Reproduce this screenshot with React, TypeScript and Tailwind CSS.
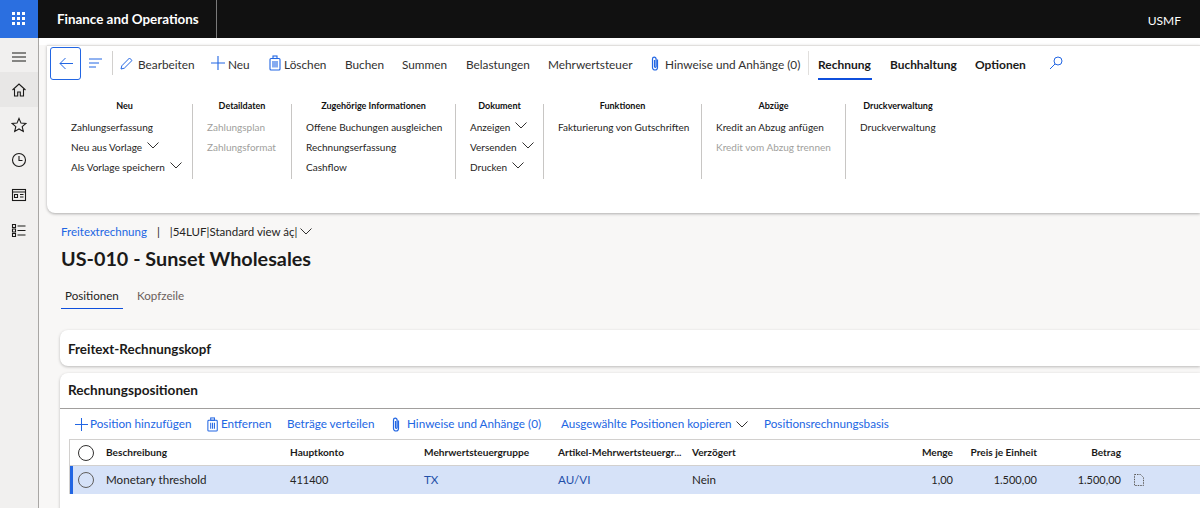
const font = "font-['Lato','Open_Sans',sans-serif]";

function Chevron({ className = "" }: { className?: string }) {
  return (
    <svg className={`shrink-0 ${className}`} width="12" height="7" viewBox="0 0 12 7" fill="none" stroke="#323130" strokeWidth="1">
      <path d="M.5.5 6 6 11.5.5" />
    </svg>
  );
}

function Waffle() {
  return (
    <svg width="14" height="14" viewBox="0 0 14 14" fill="#fff">
      {[1, 6, 11].map((y) =>
        [1, 6, 11].map((x) => <rect key={`${x}-${y}`} x={x - 1} y={y - 1} width="3" height="3" />),
      )}
    </svg>
  );
}

function Trash({ size = 16 }: { size?: number }) {
  return (
    <svg className="shrink-0" width={size} height={size} viewBox="0 0 16 16" fill="none" stroke="#2266e3" strokeWidth="1.1">
      <rect x="2" y="3.5" width="10" height="11.5" rx="1" />
      <rect x="5" y="1" width="4" height="2.5" />
      <path d="M5 6v6.5M7 6v6.5M9 6v6.5" />
    </svg>
  );
}

function Plus({ size = 14 }: { size?: number }) {
  return (
    <svg className="shrink-0" width={size} height={size} viewBox="0 0 14 14" stroke="#2266e3" strokeWidth="1.1">
      <path d="M7 0v14M0 7h14" />
    </svg>
  );
}

function Clip() {
  return (
    <svg className="shrink-0" width="10" height="15" viewBox="0 0 10 15" fill="none" stroke="#2266e3" strokeWidth="1.2">
      <path d="M7.5 3.5v8a2.5 2.5 0 0 1-5 0V3a1.8 1.8 0 0 1 3.6 0v7.5a.8.8 0 0 1-1.6 0V4" />
    </svg>
  );
}

function SideIcon({ kind, active }: { kind: string; active?: boolean }) {
  return (
    <div className={`flex h-[35px] w-full items-center justify-center ${active ? "bg-[#e8e7e6]" : ""}`}>
      <svg width="16" height="16" viewBox="0 0 16 16" fill="none" stroke="#1b1a19" strokeWidth="1.1">
        {kind === "home" && <path d="M1.5 8 8 2l6.5 6M3.5 7v7h3.2v-4h2.6v4h3.2V7" />}
        {kind === "star" && <path d="m8 1.5 2 4.6 4.9.4-3.7 3.2 1.1 4.8L8 12l-4.3 2.5 1.1-4.8L1.1 6.5 6 6.1z" />}
        {kind === "clock" && (
          <>
            <circle cx="8" cy="8" r="6.5" />
            <path d="M8 4v4.5h3.5" />
          </>
        )}
        {kind === "card" && (
          <>
            <rect x="1.5" y="2.5" width="13" height="11" />
            <path d="M1.5 5h13M3.5 7.5h3v3h-3zM9 7.5h3.5M9 10h3.5" />
          </>
        )}
        {kind === "list" && <path d="M1.5 2.5h3v3h-3zM1.5 7h3v3h-3zM1.5 11.5h3v3h-3zM6.5 4h8M6.5 8.5h8M6.5 13h8" />}
      </svg>
    </div>
  );
}

function Cmd({ children, w }: { children: React.ReactNode; w?: string }) {
  return <span className={`shrink-0 pt-[3px] whitespace-nowrap text-[11.8px] text-[#323130] ${w ?? ""}`}>{children}</span>;
}

type Item = { label: string; menu?: boolean; off?: boolean };

function Group({ title, items, width, last }: { title: string; items: Item[]; width: string; last?: boolean }) {
  return (
    <div className={`flex shrink-0 ${width}`}>
      <div className="flex min-w-0 flex-1 flex-col">
        <div className="mb-[4px] h-[14px] text-center text-[9px] leading-[14px] font-bold text-[#111]">{title}</div>
        <div className="flex flex-col items-start pl-[14px]">
          {items.map((it) => (
            <div
              key={it.label}
              className={`flex h-[20px] items-center gap-[5px] whitespace-nowrap text-[10px] ${it.off ? "text-[#a19f9d]" : "text-[#252423]"}`}
            >
              {it.label}
              {it.menu && <Chevron className="-mt-[3px]" />}
            </div>
          ))}
        </div>
      </div>
      {!last && <div className="mt-[5px] h-[75px] w-px shrink-0 bg-[#c8c6c4]" />}
    </div>
  );
}

function Th({ children, className }: { children: React.ReactNode; className: string }) {
  return <div className={`shrink-0 whitespace-nowrap text-[10.1px] font-bold text-[#1b1a19] ${className}`}>{children}</div>;
}

function Td({ children, className }: { children: React.ReactNode; className: string }) {
  return <div className={`shrink-0 ${className}`}>{children}</div>;
}

export default function App() {
  return (
    <div className={`flex h-[508px] w-[1200px] flex-col overflow-hidden bg-[#f8f7f6] ${font}`}>
      {/* top bar */}
      <header className="flex h-[38px] shrink-0 items-center bg-[#111111] text-white">
        <div className="flex h-full w-[38px] items-center justify-center bg-[#2b6fe0]">
          <Waffle />
        </div>
        <div className="flex h-full w-[179px] items-center border-r border-[#7a7a7a] pl-[19px] text-[13.4px] font-bold whitespace-nowrap">
          Finance and Operations
        </div>
        <div className="ml-auto pt-[3px] pr-[19px] text-[12px]">USMF</div>
      </header>

      <div className="flex min-h-0 flex-1">
        {/* side nav */}
        <nav className="flex w-[39px] shrink-0 flex-col items-center border-r border-[#a8a6a4] bg-[#f1f0ef]">
          <div className="flex h-[34px] w-full items-center justify-center pt-[4px]">
            <svg width="14" height="10" viewBox="0 0 14 10" stroke="#1b1a19" strokeWidth="1.2">
              <path d="M0 1h14M0 5h14M0 9h14" />
            </svg>
          </div>
          <SideIcon kind="home" active />
          <SideIcon kind="star" />
          <SideIcon kind="clock" />
          <SideIcon kind="card" />
          <SideIcon kind="list" />
        </nav>

        <main className="min-w-0 flex-1 overflow-hidden">
          <div className="h-[7px] bg-white" />
          {/* ribbon */}
          <section className="ml-[8px] h-[168px] rounded-bl-[8px] border-t border-[#e1dfdd] bg-white shadow-[0_1px_3px_rgba(0,0,0,0.3)]">
            <div className="flex h-[34px] items-center pl-[3px]">
              <div className="flex h-[33px] w-[31px] shrink-0 items-center justify-center rounded-[3px] border border-[#2266e3]">
                <svg width="14" height="13" viewBox="0 0 14 13" fill="none" stroke="#2266e3" strokeWidth="1">
                  <path d="M14 6.5H1M6.5 1 1 6.5 6.5 12" />
                </svg>
              </div>
              <div className="ml-[8px] flex w-[23px] shrink-0 justify-start">
                <svg width="14" height="10" viewBox="0 0 14 10" stroke="#2266e3" strokeWidth="1">
                  <path d="M0 1h13M0 5h10M0 9h7" />
                </svg>
              </div>
              <div className="mr-[7px] h-[24px] w-px shrink-0 bg-[#d2d0ce]" />
              <svg className="mr-[5px] shrink-0" width="13" height="13" viewBox="0 0 13 13" fill="none" stroke="#2266e3">
                <path d="M1 12l.8-3.2L9.5 1l2.5 2.5-7.7 7.7z" />
              </svg>
              <Cmd w="w-[73px]">Bearbeiten</Cmd>
              <Plus />
              <span className="w-[3px] shrink-0" />
              <Cmd w="w-[40px]">Neu</Cmd>
              <Trash />
              <Cmd w="w-[61px]">Löschen</Cmd>
              <Cmd w="w-[57px]">Buchen</Cmd>
              <Cmd w="w-[64px]">Summen</Cmd>
              <Cmd w="w-[82px]">Belastungen</Cmd>
              <Cmd w="w-[102px]">Mehrwertsteuer</Cmd>
              <Clip />
              <span className="w-[5px] shrink-0" />
              <Cmd w="w-[143px]">Hinweise und Anhänge (0)</Cmd>
              <div className="h-[24px] w-px shrink-0 bg-[#e1dfdd]" />
              <span className="w-[9px] shrink-0" />
              <div className="relative flex h-full w-[72px] shrink-0 items-center pt-[3px]">
                <span className="text-[12px] font-bold text-[#1b1a19]">Rechnung</span>
                <span className="absolute bottom-0 left-0 h-[2px] w-[54px] bg-[#0f4fdc]" />
              </div>
              <span className="w-[85px] shrink-0 pt-[3px] text-[11.9px] font-bold text-[#1b1a19]">Buchhaltung</span>
              <span className="w-[74px] shrink-0 pt-[3px] text-[12px] font-bold text-[#1b1a19]">Optionen</span>
              <svg width="14" height="14" viewBox="0 0 14 14" fill="none" stroke="#2266e3">
                <circle cx="9" cy="5" r="4" />
                <path d="M6 8 1 13" />
              </svg>
            </div>

            <div className="mt-[19px] flex pl-[10px]">
              <Group
                title="Neu"
                width="w-[136px]"
                items={[
                  { label: "Zahlungserfassung" },
                  { label: "Neu aus Vorlage", menu: true },
                  { label: "Als Vorlage speichern", menu: true },
                ]}
              />
              <Group title="Detaildaten" width="w-[99px]" items={[{ label: "Zahlungsplan", off: true }, { label: "Zahlungsformat", off: true }]} />
              <Group
                title="Zugehörige Informationen"
                width="w-[164px]"
                items={[{ label: "Offene Buchungen ausgleichen" }, { label: "Rechnungserfassung" }, { label: "Cashflow" }]}
              />
              <Group
                title="Dokument"
                width="w-[88px]"
                items={[
                  { label: "Anzeigen", menu: true },
                  { label: "Versenden", menu: true },
                  { label: "Drucken", menu: true },
                ]}
              />
              <Group title="Funktionen" width="w-[158px]" items={[{ label: "Fakturierung von Gutschriften" }]} />
              <Group
                title="Abzüge"
                width="w-[144px]"
                items={[{ label: "Kredit an Abzug anfügen" }, { label: "Kredit vom Abzug trennen", off: true }]}
              />
              <Group title="Druckverwaltung" width="w-[104px]" last items={[{ label: "Druckverwaltung" }]} />
            </div>
          </section>

          {/* page head */}
          <div className="mt-[10px] flex h-[17px] items-center pl-[22px] text-[11.5px] text-[#252423]">
            <span className="text-[#2266e3]">Freitextrechnung</span>
            <span className="mx-[10px]">|</span>
            <span>|54LUF|Standard view áç|</span>
            <Chevron className="ml-[3px]" />
          </div>
          <h1 className="mt-[4px] h-[28px] pl-[22px] text-[19.8px] leading-[28px] font-bold text-[#1b1a19]">
            US-010 - Sunset Wholesales
          </h1>
          <div className="mt-[15px] flex h-[22px] pl-[22px] text-[11.6px]">
            <div className="w-[62px] border-b border-[#0f4fdc] pl-[4px] text-[#252423]">Positionen</div>
            <div className="pl-[14px] text-[#6b5f5c]">Kopfzeile</div>
          </div>

          {/* header card */}
          <div className="mt-[21px] ml-[21px] flex h-[36px] items-center rounded-l-[8px] bg-white pt-[3px] pl-[8px] text-[13.4px] font-bold text-[#1b1a19] shadow-[0_1px_3px_rgba(0,0,0,0.25)]">
            Freitext-Rechnungskopf
          </div>

          {/* lines card */}
          <section className="mt-[7px] ml-[21px] h-[200px] rounded-tl-[8px] bg-white shadow-[0_1px_3px_rgba(0,0,0,0.25)]">
            <div className="flex h-[36px] items-center border-b border-[#a19f9d] pl-[8px] text-[13.6px] font-bold text-[#1b1a19]">
              Rechnungspositionen
            </div>
            <div className="flex h-[30px] items-center pl-[15px] text-[11.7px] text-[#2266e3]">
              <Plus size={13} />
              <span className="ml-[2px] w-[116px] shrink-0 whitespace-nowrap">Position hinzufügen</span>
              <Trash size={15} />
              <span className="w-[66px] shrink-0">Entfernen</span>
              <span className="w-[104px] shrink-0 whitespace-nowrap">Beträge verteilen</span>
              <Clip />
              <span className="ml-[6px] w-[154px] shrink-0 whitespace-nowrap">Hinweise und Anhänge (0)</span>
              <span className="w-[175px] shrink-0 whitespace-nowrap">Ausgewählte Positionen kopieren</span>
              <Chevron />
              <span className="ml-[16px] whitespace-nowrap">Positionsrechnungsbasis</span>
            </div>

            <div className="ml-[9px] border-l border-[#d2d0ce]">
              <div className="flex h-[27px] items-center border-y border-[#d2d0ce]">
                <div className="flex w-[36px] shrink-0 pl-[8px]">
                  <span className="h-[16px] w-[16px] rounded-full border border-[#323130]" />
                </div>
                <Th className="w-[184px]">Beschreibung</Th>
                <Th className="w-[134px]">Hauptkonto</Th>
                <Th className="w-[134px]">Mehrwertsteuergruppe</Th>
                <Th className="w-[134px]">Artikel-Mehrwertsteuergr...</Th>
                <Th className="w-[70px]">Verzögert</Th>
                <Th className="w-[191px] text-right">Menge</Th>
                <Th className="w-[84px] text-right">Preis je Einheit</Th>
                <Th className="w-[84px] text-right">Betrag</Th>
              </div>
              <div className="flex h-[28px] items-center border-l-[3px] border-[#2266e3] bg-[#d6e2f8] text-[#252423]">
                <div className="flex w-[33px] shrink-0 pl-[5px]">
                  <span className="h-[16px] w-[16px] rounded-full border border-[#605e5c]" />
                </div>
                <Td className="w-[184px] text-[11.6px]">Monetary threshold</Td>
                <Td className="w-[134px] text-[11px]">411400</Td>
                <Td className="w-[134px] text-[11.6px] text-[#1f4fa8]">TX</Td>
                <Td className="w-[134px] text-[11.6px] text-[#1f4fa8]">AU/VI</Td>
                <Td className="w-[70px] text-[11.6px]">Nein</Td>
                <Td className="w-[191px] text-right text-[11px]">1,00</Td>
                <Td className="w-[84px] text-right text-[11px]">1.500,00</Td>
                <Td className="w-[84px] text-right text-[11px]">1.500,00</Td>
                <svg className="ml-[13px] shrink-0" width="10" height="12" viewBox="0 0 10 12" fill="none" stroke="#605e5c" strokeDasharray="1.5 1">
                  <path d="M.5.5h6l3 3v8H.5z" />
                </svg>
              </div>
            </div>
          </section>
        </main>
      </div>
    </div>
  );
}
